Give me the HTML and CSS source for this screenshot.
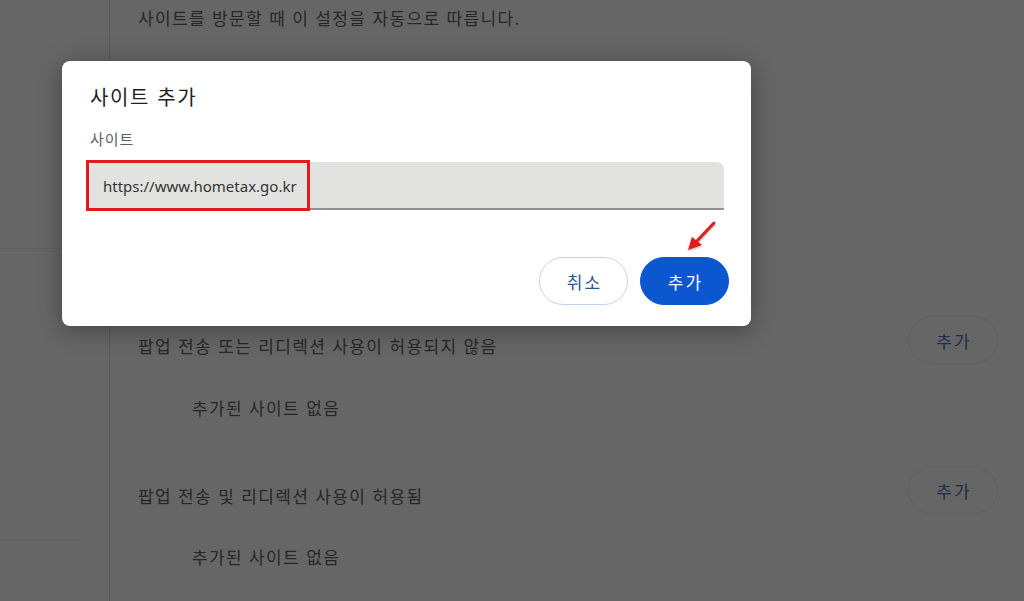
FILE: index.html
```html
<!DOCTYPE html>
<html lang="ko">
<head>
<meta charset="utf-8">
<title>사이트 추가</title>
<link rel="stylesheet" href="styles.css">
</head>
<body>
<div class="page">
  <aside class="sidebar">
    <div class="side-block side-a"></div>
    <div class="side-block side-b"></div>
  </aside>
  <main class="content">
    <p class="desc">사이트를 방문할 때 이 설정을 자동으로 따릅니다.</p>
    <section class="group group-first">
      <div class="row">
        <span class="row-title">팝업 전송 또는 리디렉션 사용이 허용되지 않음</span>
        <button class="bg-btn">추가</button>
      </div>
      <p class="empty">추가된 사이트 없음</p>
    </section>
    <section class="group group-second">
      <div class="row">
        <span class="row-title">팝업 전송 및 리디렉션 사용이 허용됨</span>
        <button class="bg-btn">추가</button>
      </div>
      <p class="empty">추가된 사이트 없음</p>
    </section>
  </main>
</div>

<div class="dialog">
  <h2 class="dialog-title">사이트 추가</h2>
  <label class="field-label">사이트</label>
  <div class="field">
    <span class="field-text">https://www.hometax.go.kr</span>
    <span class="highlight"></span>
  </div>
  <div class="actions">
    <button class="btn btn-cancel">취소</button>
    <button class="btn btn-add">추가</button>
  </div>
</div>

<svg class="arrow" width="40" height="40" viewBox="0 0 40 40" xmlns="http://www.w3.org/2000/svg">
  <defs>
    <filter id="sh" x="-30%" y="-30%" width="160%" height="160%">
      <feDropShadow dx="0" dy="1" stdDeviation="1" flood-color="#000" flood-opacity="0.35"/>
    </filter>
  </defs>
  <g filter="url(#sh)">
    <line x1="34" y1="5" x2="17" y2="23" stroke="#e21d1d" stroke-width="3" stroke-linecap="round"/>
    <polygon points="8,32 12,19 22,27" fill="#e21d1d"/>
  </g>
</svg>
</body>
</html>
```

FILE: styles.css
```css
* { box-sizing: border-box; }

html, body {
  margin: 0;
  padding: 0;
  width: 1024px;
  height: 601px;
  overflow: hidden;
  background: #666666;
  font-family: "Noto Sans CJK KR", "Noto Sans", sans-serif;
  color: #262626;
}

.page {
  display: flex;
  height: 601px;
}

.sidebar {
  width: 110px;
  flex: none;
  border-right: 1px solid #5a5a5a;
  display: flex;
  flex-direction: column;
}

.side-block {
  width: 84px;
  border-bottom: 1px solid #5f5f5f;
}
.side-a { height: 249px; }
.side-b { height: 291px; }

.content {
  flex: 1;
  padding: 8px 26px 0 28px;
}

.desc,
.row-title,
.empty {
  font-size: 17px;
  letter-spacing: 1.35px;
  line-height: 20px;
}

.desc { margin: 0; }

.group-first { margin-top: 288px; }
.group-second { margin-top: 48px; }

.row {
  display: flex;
  align-items: center;
  justify-content: space-between;
}

.row-title { padding-top: 12px; }

.bg-btn {
  width: 90px;
  height: 48px;
  border-radius: 24px;
  border: 1px solid #58606e;
  background: transparent;
  color: #1d2c48;
  font-family: inherit;
  font-size: 17px;
  letter-spacing: 2px;
  padding: 0 0 0 2px;
}

.empty { margin: 34px 0 0 54px; }
.group-second .empty { margin-top: 33px; }

.dialog {
  position: absolute;
  left: 62px;
  top: 61px;
  width: 689px;
  height: 265px;
  background: #ffffff;
  border-radius: 8px;
  box-shadow: 0 4px 24px rgba(0, 0, 0, 0.35);
  padding: 24px 22px 21px 25px;
  display: flex;
  flex-direction: column;
}

.dialog-title {
  margin: 0 0 0 3px;
  font-size: 20px;
  letter-spacing: 1.6px;
  line-height: 24px;
  font-weight: 400;
  color: #1f1f1f;
}

.field-label {
  margin: 20px 0 0 3px;
  font-size: 15px;
  letter-spacing: 1px;
  line-height: 20px;
  color: #5e5e5e;
}

.field {
  position: relative;
  margin: 13px 5px 0 0;
  height: 48px;
  background: #e2e3e1;
  border-radius: 8px 8px 0 0;
  border-bottom: 2px solid #8f918f;
  display: flex;
  align-items: center;
  padding: 2px 16px 0;
}

.field-text {
  font-family: "Noto Sans", "Noto Sans CJK KR", sans-serif;
  font-size: 15px;
  color: #333333;
}

.highlight {
  position: absolute;
  left: -1px;
  top: -2px;
  width: 224px;
  height: 51px;
  border: 3px solid #e01b1e;
}

.actions {
  margin-top: 47px;
  display: flex;
  justify-content: flex-end;
  gap: 12px;
}

.btn {
  width: 89px;
  height: 48px;
  border-radius: 24px;
  font-family: inherit;
  font-size: 17px;
  letter-spacing: 2px;
  padding: 0 0 0 2px;
}

.btn-cancel {
  background: #ffffff;
  border: 1px solid #c3d3ec;
  color: #2f5489;
}

.btn-add {
  background: #0b57d0;
  border: 1px solid #0b57d0;
  color: #ffffff;
}

.arrow {
  position: absolute;
  left: 680px;
  top: 218px;
}
```
